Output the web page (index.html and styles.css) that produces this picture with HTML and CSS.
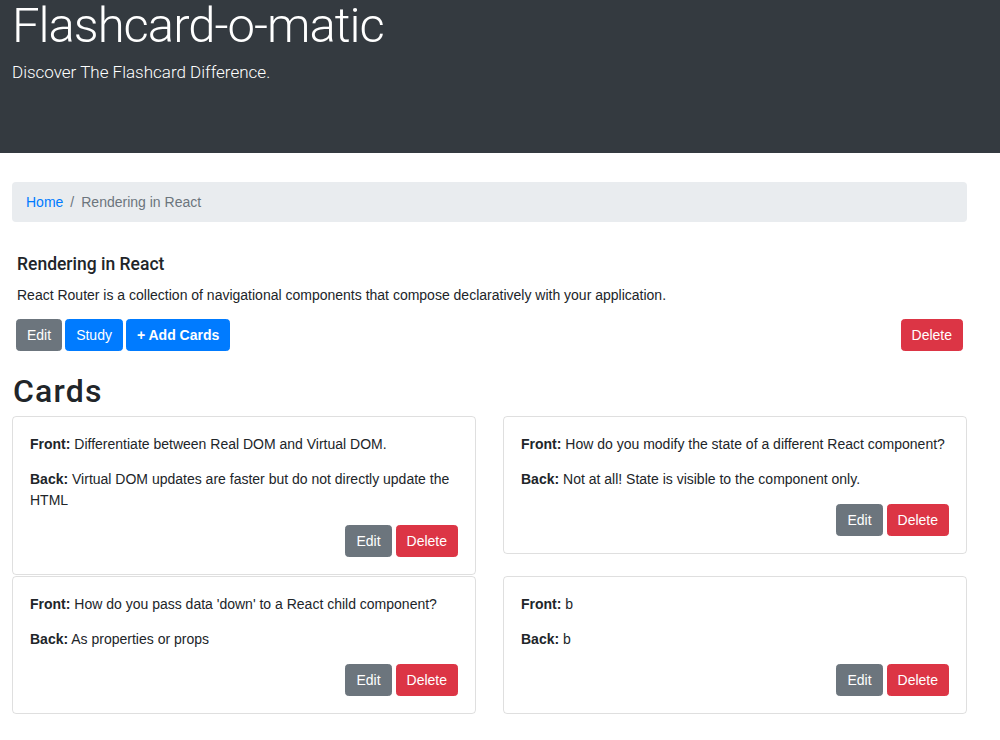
FILE: index.html
```html
<!DOCTYPE html>
<html lang="en">
<head>
<meta charset="utf-8">
<title>Flashcard-o-matic</title>
<link rel="stylesheet" href="styles.css">
</head>
<body>
<header class="hero">
  <h1 class="hero-title">Flashcard-o-matic</h1>
  <p class="hero-lead">Discover The Flashcard Difference.</p>
</header>
<main class="page">
  <nav class="crumbs">
    <a class="crumb-link" href="#">Home</a><span class="crumb-sep">/</span><span class="crumb-active">Rendering in React</span>
  </nav>
  <section class="deck">
    <h5 class="deck-title">Rendering in React</h5>
    <p class="deck-desc">React Router is a collection of navigational components that compose declaratively with your application.</p>
    <div class="deck-actions">
      <div class="btn-group">
        <button class="btn btn-secondary">Edit</button>
        <button class="btn btn-primary">Study</button>
        <button class="btn btn-primary btn-bold">+ Add Cards</button>
      </div>
      <button class="btn btn-danger">Delete</button>
    </div>
  </section>
  <h2 class="cards-heading">Cards</h2>
  <div class="card-grid">
    <div class="card">
      <p class="card-line"><b>Front:</b> Differentiate between Real DOM and Virtual DOM.</p>
      <p class="card-line"><b>Back:</b> Virtual DOM updates are faster but do not directly update the HTML</p>
      <div class="card-actions"><button class="btn btn-secondary">Edit</button><button class="btn btn-danger">Delete</button></div>
    </div>
    <div class="card">
      <p class="card-line"><b>Front:</b> How do you modify the state of a different React component?</p>
      <p class="card-line"><b>Back:</b> Not at all! State is visible to the component only.</p>
      <div class="card-actions"><button class="btn btn-secondary">Edit</button><button class="btn btn-danger">Delete</button></div>
    </div>
    <div class="card">
      <p class="card-line"><b>Front:</b> How do you pass data 'down' to a React child component?</p>
      <p class="card-line"><b>Back:</b> As properties or props</p>
      <div class="card-actions"><button class="btn btn-secondary">Edit</button><button class="btn btn-danger">Delete</button></div>
    </div>
    <div class="card">
      <p class="card-line"><b>Front:</b> b</p>
      <p class="card-line"><b>Back:</b> b</p>
      <div class="card-actions"><button class="btn btn-secondary">Edit</button><button class="btn btn-danger">Delete</button></div>
    </div>
  </div>
</main>
</body>
</html>
```
FILE: styles.css
```css
* { box-sizing: border-box; }
html, body { margin: 0; padding: 0; background: #fff; }
body {
  font-family: "Liberation Sans", Arial, sans-serif;
  font-size: 14px;
  line-height: 21px;
  color: #212529;
}
.hero {
  background: #343a40;
  color: #fff;
  height: 153px;
  padding: 0 12px;
}
.hero-title {
  margin: 0;
  font-family: Roboto, "Liberation Sans", sans-serif;
  font-size: 49px;
  font-weight: 300;
  line-height: 52px;
  letter-spacing: -1px;
}
.hero-lead {
  margin: 7px 0 0;
  font-family: Roboto, "Liberation Sans", sans-serif;
  font-size: 17px;
  font-weight: 300;
  line-height: 26px;
}
.page {
  padding: 29px 33px 20px 12px;
}
.crumbs {
  background: #e9ecef;
  border-radius: 4px;
  padding: 10px 14px;
  line-height: 20px;
  display: flex;
}
.crumb-link { color: #007bff; text-decoration: none; }
.crumb-sep { color: #6c757d; padding: 0 7px; }
.crumb-active { color: #6c757d; }
.deck {
  padding: 0 4px;
  margin-top: 32px;
}
.deck-title {
  margin: 0 0 10px;
  font-family: Roboto, "Liberation Sans", sans-serif;
  font-size: 17.5px;
  font-weight: 500;
  line-height: 21px;
  padding-left: 1px;
}
.deck-desc {
  margin: 0 0 13px;
  padding-left: 1px;
}
.deck-actions {
  display: flex;
  justify-content: space-between;
  align-items: center;
}
.btn-group { display: flex; gap: 3px; }
.btn {
  font-family: inherit;
  font-size: 14px;
  line-height: 20px;
  padding: 5px 10px;
  border: 1px solid transparent;
  border-radius: 3.5px;
  color: #fff;
  cursor: pointer;
}
.btn-primary { background: #007bff; border-color: #007bff; }
.btn-secondary { background: #6c757d; border-color: #6c757d; }
.btn-danger { background: #dc3545; border-color: #dc3545; }
.btn-bold { font-weight: 700; }
.cards-heading {
  margin: 22px 0 7px;
  padding-left: 1px;
  font-family: Roboto, "Liberation Sans", sans-serif;
  font-size: 32px;
  font-weight: 500;
  line-height: 36px;
  letter-spacing: 1.2px;
}
.card-grid {
  display: grid;
  grid-template-columns: 464px 464px;
  column-gap: 27px;
  row-gap: 1px;
  align-items: start;
}
.card {
  border: 1px solid rgba(0,0,0,.125);
  border-radius: 4px;
  padding: 17px;
}
.card-line { margin: 0 0 14px; }
.card-actions {
  display: flex;
  justify-content: flex-end;
  gap: 4px;
}
```
